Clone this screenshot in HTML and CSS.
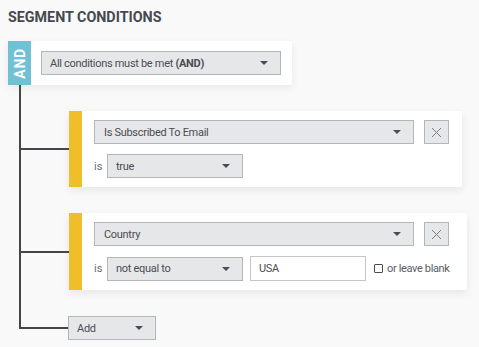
FILE: index.html
```html
<!DOCTYPE html>
<html>
<head>
<meta charset="utf-8">
<link rel="stylesheet" href="styles.css">
</head>
<body>
<div class="page">
  <h1 class="title">SEGMENT CONDITIONS</h1>
  <div class="group-head">
    <div class="logic-tab"><span class="logic-text">AND</span></div>
    <div class="head-body">
      <div class="select select-logic"><span>All conditions must be met <b>(AND)</b></span><i class="caret"></i></div>
    </div>
  </div>
  <div class="tree">
    <div class="cond">
      <div class="cond-bar"></div>
      <div class="cond-body">
        <div class="row">
          <div class="select select-field"><span>Is Subscribed To Email</span><i class="caret"></i></div>
          <button class="xbtn"><svg width="11" height="11" viewBox="0 0 11 11"><path d="M1 1L10 10M10 1L1 10" stroke="#7a7c80" stroke-width="1" fill="none"/></svg></button>
        </div>
        <div class="row">
          <span class="is">is</span>
          <div class="select select-op"><span>true</span><i class="caret"></i></div>
        </div>
      </div>
    </div>
    <div class="cond">
      <div class="cond-bar"></div>
      <div class="cond-body">
        <div class="row">
          <div class="select select-field"><span>Country</span><i class="caret"></i></div>
          <button class="xbtn"><svg width="11" height="11" viewBox="0 0 11 11"><path d="M1 1L10 10M10 1L1 10" stroke="#7a7c80" stroke-width="1" fill="none"/></svg></button>
        </div>
        <div class="row">
          <span class="is">is</span>
          <div class="select select-op"><span>not equal to</span><i class="caret"></i></div>
          <div class="text-input">USA</div>
          <label class="blank"><span class="check"></span>or leave blank</label>
        </div>
      </div>
    </div>
    <div class="add-row">
      <div class="select select-add"><span>Add</span><i class="caret"></i></div>
    </div>
  </div>
</div>
</body>
</html>
```

FILE: styles.css
```css
html, body {
  margin: 0;
  padding: 0;
  background: #f9f9f9;
}
body {
  font-family: Roboto, "Liberation Sans", sans-serif;
  color: #4a4d52;
}
.page {
  padding: 9px 8px 0 8px;
}
.title {
  margin: 0 0 15px 0;
  font-size: 14.3px;
  line-height: 17px;
  font-weight: 700;
  color: #45484f;
}
.group-head {
  display: flex;
  width: 284px;
  height: 44px;
  background: #fff;
  box-shadow: 0 3px 8px rgba(0,0,0,0.07);
}
.logic-tab {
  width: 23px;
  flex: none;
  background: #6fc1d3;
  display: flex;
  align-items: center;
  justify-content: center;
}
.logic-text {
  writing-mode: vertical-rl;
  transform: rotate(180deg);
  color: #fff;
  font-weight: 700;
  font-size: 14px;
  letter-spacing: 0.8px;
  line-height: 14px;
}
.head-body {
  padding: 10px 11px 10px 10px;
}
.select {
  box-sizing: border-box;
  height: 24px;
  display: flex;
  align-items: center;
  padding: 0 12px 0 8px;
  background: #e6e7e9;
  border: 1px solid #b3b5b8;
  font-size: 11px;
  letter-spacing: -0.3px;
  color: #4a4d52;
  white-space: nowrap;
}
.select b { font-weight: 700; }
.caret {
  margin-left: auto;
  width: 0;
  height: 0;
  border-left: 4px solid transparent;
  border-right: 4px solid transparent;
  border-top: 4px solid #4a4d52;
}
.select-logic { width: 240px; }
.tree {
  position: relative;
  display: flex;
  flex-direction: column;
  align-items: flex-start;
  gap: 26px;
  padding: 26px 0 0 61px;
}
.tree::before {
  content: "";
  position: absolute;
  left: 11px;
  top: 0;
  bottom: 11px;
  width: 2px;
  background: #444649;
}
.cond {
  position: relative;
  display: flex;
  background: #fff;
  box-shadow: 0 3px 8px rgba(0,0,0,0.08);
}
.cond::before, .add-row::before {
  content: "";
  position: absolute;
  left: -48px;
  width: 48px;
  top: 50%;
  margin-top: -1px;
  height: 2px;
  background: #444649;
}
.cond-bar {
  width: 13px;
  flex: none;
  background: #efbe2b;
}
.cond-body {
  display: flex;
  flex-direction: column;
  gap: 10px;
  padding: 9px 13px 9px 12px;
}
.row {
  display: flex;
  align-items: center;
}
.select-field { width: 320px; padding-left: 9px; }
.xbtn {
  box-sizing: border-box;
  margin: 0 0 0 10px;
  width: 25px;
  height: 24px;
  padding: 0;
  background: #e6e7e9;
  border: 1px solid #b3b5b8;
  display: flex;
  align-items: center;
  justify-content: center;
}
.is {
  width: 13px;
  flex: none;
  font-size: 11px;
  color: #6a6d72;
}
.select-op { width: 136px; }
.text-input {
  box-sizing: border-box;
  margin-left: 7px;
  width: 116px;
  height: 25px;
  padding: 0 8px;
  display: flex;
  align-items: center;
  background: #fff;
  border: 1px solid #c4c6c9;
  font-size: 11px;
  letter-spacing: -0.3px;
  color: #4a4d52;
}
.blank {
  display: flex;
  align-items: center;
  margin-left: 8px;
  padding-right: 4px;
  font-size: 11px;
  letter-spacing: -0.35px;
  color: #5a5d62;
  white-space: nowrap;
}
.check {
  box-sizing: border-box;
  width: 9px;
  height: 9px;
  border: 1px solid #4a4d52;
  border-radius: 1px;
  margin-right: 4px;
  background: #fff;
}
.add-row {
  position: relative;
  margin-left: -1px;
}
.add-row::before { left: -47px; width: 47px; }
.select-add { width: 88px; }
```
